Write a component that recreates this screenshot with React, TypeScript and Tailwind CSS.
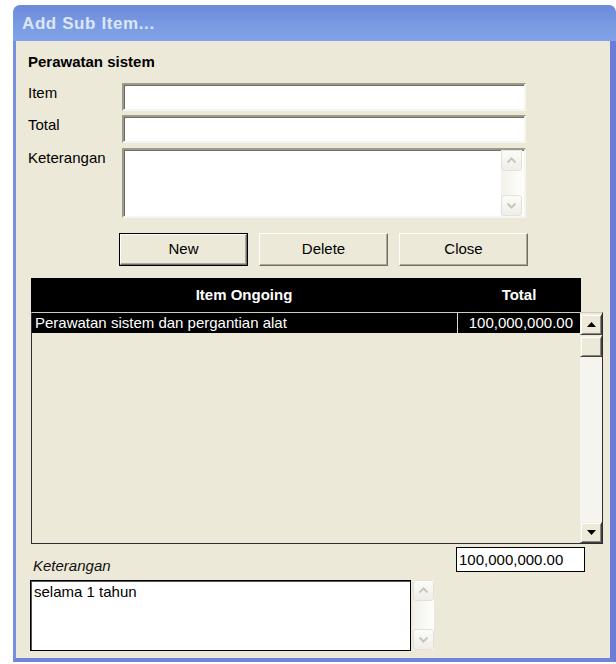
import React from "react";

const fontBase = "font-['Liberation_Sans',Arial,sans-serif]";

// grey chevron button used by the themed (disabled) scrollbars
function SoftScrollButton({ dir }: { dir: "up" | "down" }) {
  return (
    <div className="h-[21px] w-[21px] rounded-[3px] border border-[#e4e2d8] bg-gradient-to-b from-[#fbfbf9] to-[#efeee8] flex items-center justify-center">
      <svg width="11" height="7" viewBox="0 0 11 7">
        <polyline
          points={dir === "up" ? "1.5,5.5 5.5,1.5 9.5,5.5" : "1.5,1.5 5.5,5.5 9.5,1.5"}
          fill="none"
          stroke="#c9c7bb"
          strokeWidth="2"
        />
      </svg>
    </div>
  );
}

function SoftScrollbar({ className = "" }: { className?: string }) {
  return (
    <div className={`flex flex-col w-[21px] bg-gradient-to-r from-[#f2f1eb] to-[#fdfdfb] ${className}`}>
      <SoftScrollButton dir="up" />
      <div className="flex-1" />
      <SoftScrollButton dir="down" />
    </div>
  );
}

// classic raised 3D box (scroll buttons, thumb)
const raised =
  "bg-[#ece9d8] border border-t-[#f1efe2] border-l-[#f1efe2] border-r-[#404040] border-b-[#404040] shadow-[inset_1px_1px_0_#ffffff,inset_-1px_-1px_0_#8a877c]";

function ClassicScrollButton({ dir }: { dir: "up" | "down" }) {
  return (
    <div className={`h-[21px] w-[22px] flex items-center justify-center ${raised}`}>
      <svg width="9" height="5" viewBox="0 0 9 5">
        <polygon points={dir === "up" ? "0,5 4.5,0 9,5" : "0,0 4.5,5 9,0"} fill="#000" />
      </svg>
    </div>
  );
}

function Button({ label, isDefault = false }: { label: string; isDefault?: boolean }) {
  const face = (
    <div
      className={`flex-1 flex items-center justify-center text-[15px] text-black bg-[#ece9d8] border border-t-white border-l-white border-r-[#716f64] border-b-[#716f64] shadow-[inset_-1px_-1px_0_#aca899]`}
    >
      {label}
    </div>
  );
  return (
    <div
      className={`h-[33px] w-[129px] flex ${isDefault ? "border border-black" : ""}`}
    >
      {face}
    </div>
  );
}

const sunken =
  "bg-white border-2 border-t-[#9d9a8c] border-l-[#9d9a8c] border-r-[#f6f5ef] border-b-[#f6f5ef] shadow-[inset_1px_1px_0_#6f6d63]";

function FieldRow({ label, children, className = "" }: { label: string; children: React.ReactNode; className?: string }) {
  return (
    <div className={`flex items-start ${className}`}>
      <div className="w-[94px] ml-[12px] pt-[1px] text-[15px] leading-[18px] text-black">{label}</div>
      {children}
    </div>
  );
}

export default function App() {
  return (
    <div className={`w-[616px] h-[664px] bg-white overflow-hidden ${fontBase}`}>
      <div className="ml-[13px] mt-[5px] w-[603px] h-[657px] flex flex-col rounded-t-[7px] overflow-hidden">
        {/* title bar */}
        <div className="h-[36px] shrink-0 bg-gradient-to-b from-[#6c89db] via-[#7999e2] to-[#82a3e8] flex items-center pl-[9px] pt-[2px]">
          <span className="text-[17px] font-bold tracking-[0.6px] text-[#dce6f7]">Add Sub Item...</span>
        </div>

        {/* window body */}
        <div className="flex-1 flex flex-col bg-[#ece9d8] border-l-[3px] border-r-[6px] border-b-[4px] border-l-[#7490df] border-r-[#6a7bd8] border-b-[#6f85db]">
          <div className="mt-[12px] ml-[12px] text-[15px] leading-[18px] font-bold text-black">Perawatan sistem</div>

          <FieldRow label="Item" className="mt-[12px]">
            <div className={`w-[404px] h-[28px] ${sunken}`} />
          </FieldRow>
          <FieldRow label="Total" className="mt-[4px]">
            <div className={`w-[404px] h-[28px] ${sunken}`} />
          </FieldRow>
          <FieldRow label="Keterangan" className="mt-[5px]">
            <div className={`w-[404px] h-[70px] flex ${sunken}`}>
              <div className="flex-1" />
              <SoftScrollbar className="my-[0px] mr-[2px]" />
            </div>
          </FieldRow>

          {/* action buttons */}
          <div className="mt-[15px] ml-[103px] flex gap-[11px]">
            <Button label="New" isDefault />
            <Button label="Delete" />
            <Button label="Close" />
          </div>

          {/* list header */}
          <div className="mt-[12px] ml-[15px] w-[550px] h-[34px] bg-black flex items-center text-white text-[15px] font-bold">
            <div className="w-[426px] text-center">Item Ongoing</div>
            <div className="flex-1 text-center">Total</div>
          </div>

          {/* list body */}
          <div className="ml-[15px] w-[572px] h-[232px] flex border border-t-[#cfcbbd] border-l-[#2e2e2e] border-r-[#2e2e2e] border-b-[#2e2e2e]">
            <div className="flex-1 flex flex-col">
              <div className="h-[20px] bg-black text-white text-[15px] leading-[20px] flex">
                <div className="w-[425px] pl-[3px] whitespace-nowrap">Perawatan sistem dan pergantian alat</div>
                <div className="flex-1 border-l border-l-[#d8d8d8] text-right pr-[7px]">100,000,000.00</div>
              </div>
            </div>
            <div className="w-[22px] flex flex-col pt-[1px]">
              <ClassicScrollButton dir="up" />
              <div className={`h-[21px] mt-[1px] ${raised}`} />
              <div className="flex-1 bg-[#f5f4ef]" />
              <ClassicScrollButton dir="down" />
            </div>
          </div>

          {/* notes and sum */}
          <div className="flex items-start">
            <div className="ml-[14px] flex flex-col">
              <div className="mt-[13px] ml-[3px] text-[15px] leading-[18px] italic text-[#111]">Keterangan</div>
              <div className="mt-[5px] flex items-start">
                <div className="w-[381px] h-[71px] bg-white border border-black shadow-[inset_1px_1px_0_#555] pl-[3px] pt-[2px] text-[15px] leading-[18px] text-black">
                  selama 1 tahun
                </div>
                <SoftScrollbar className="ml-[2px] h-[70px]" />
              </div>
            </div>
            <div className="ml-[22px] mt-[3px] w-[129px] h-[25px] bg-white border border-black pl-[2px] text-[15px] leading-[23px] text-black">
              100,000,000.00
            </div>
          </div>
        </div>
      </div>
    </div>
  );
}
